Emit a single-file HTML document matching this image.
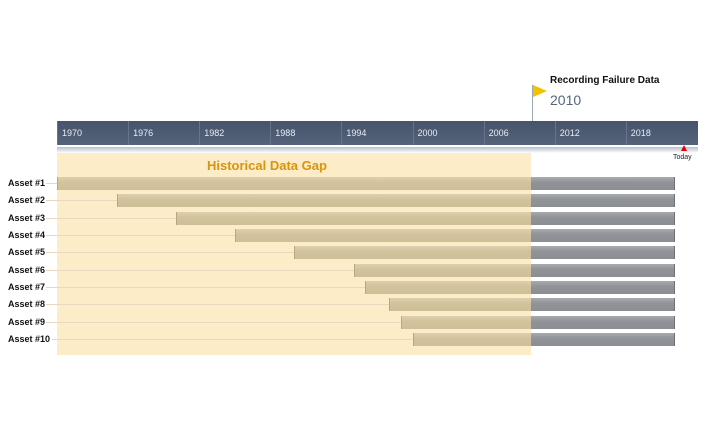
<!DOCTYPE html>
<html><head><style>
body{margin:0;width:710px;height:430px;background:#fff;position:relative;font-family:"Liberation Sans",sans-serif;overflow:hidden}
.a{position:absolute}
.hdr{left:57px;top:121px;width:641px;height:24px;background:linear-gradient(#46546b,#55637a);}
.tk{top:121px;height:24px;width:1px;background:#66738a}
.yr{top:128px;font-size:9px;color:#e8ecf2}
.strip{left:57px;top:147px;width:641px;height:6px;background:linear-gradient(#b8c0cc,#e8ebef 70%,#fff)}
.gap{left:57px;top:152px;width:474px;height:203px;background:#fdecc8}
.lbl{left:8px;font-size:9px;font-weight:bold;color:#111}
.ln{height:1px;background:#e6d9bd}
.tan{height:13px;background:linear-gradient(#ddd0ae,#d3c39c 40%,#cfbf98);border-left:1px solid #b8a880}
.gry{height:13px;background:linear-gradient(#a8abb0,#909398 40%,#8b8e93);border-right:1px solid #6d7075}
</style></head><body>
<div class="a gap"></div>
<div class="a hdr"></div>
<div class="a strip"></div>
<div class="a" style="left:532px;top:85px;width:1px;height:36px;background:#9ab"></div>
<div class="a" style="left:533px;top:85px;width:0;height:0;border-left:14px solid #f5c000;border-top:6px solid transparent;border-bottom:6px solid transparent"></div>
<div class="a" style="left:550px;top:75px;font-size:10px;font-weight:bold;color:#111">Recording Failure Data</div>
<div class="a" style="left:550px;top:92px;font-size:14px;color:#56657a">2010</div>
<div class="a" style="left:207px;top:158px;font-size:13px;font-weight:bold;color:#d9940a">Historical Data Gap</div>
<div class="a" style="left:681px;top:145px;width:0;height:0;border-left:3px solid transparent;border-right:3px solid transparent;border-bottom:6px solid #e00"></div>
<div class="a" style="left:673px;top:154px;font-size:7px;color:#222">Today</div>
<div id="t"></div>
<script>
var h='';var ys=['1970','1976','1982','1988','1994','2000','2006','2012','2018'];
for(var i=0;i<9;i++){var x=57+i*71.1;h+='<div class="a tk" style="left:'+x+'px"></div><div class="a yr" style="left:'+(x+5)+'px">'+ys[i]+'</div>';}
var st=[57,117,176,235,294,354,365,389,401,413];
for(var r=0;r<10;r++){var y=177+r*17.35;
h+='<div class="a lbl" style="top:'+(y+1)+'px">Asset #'+(r+1)+'</div>';
h+='<div class="a ln" style="left:'+(r==9?52:46)+'px;top:'+(y+6)+'px;width:'+(st[r]-46)+'px"></div>';
h+='<div class="a tan" style="left:'+st[r]+'px;top:'+y+'px;width:'+(531-st[r])+'px"></div>';
h+='<div class="a gry" style="left:531px;top:'+y+'px;width:143px"></div>';}
document.getElementById('t').innerHTML=h;
</script>
</body></html>
